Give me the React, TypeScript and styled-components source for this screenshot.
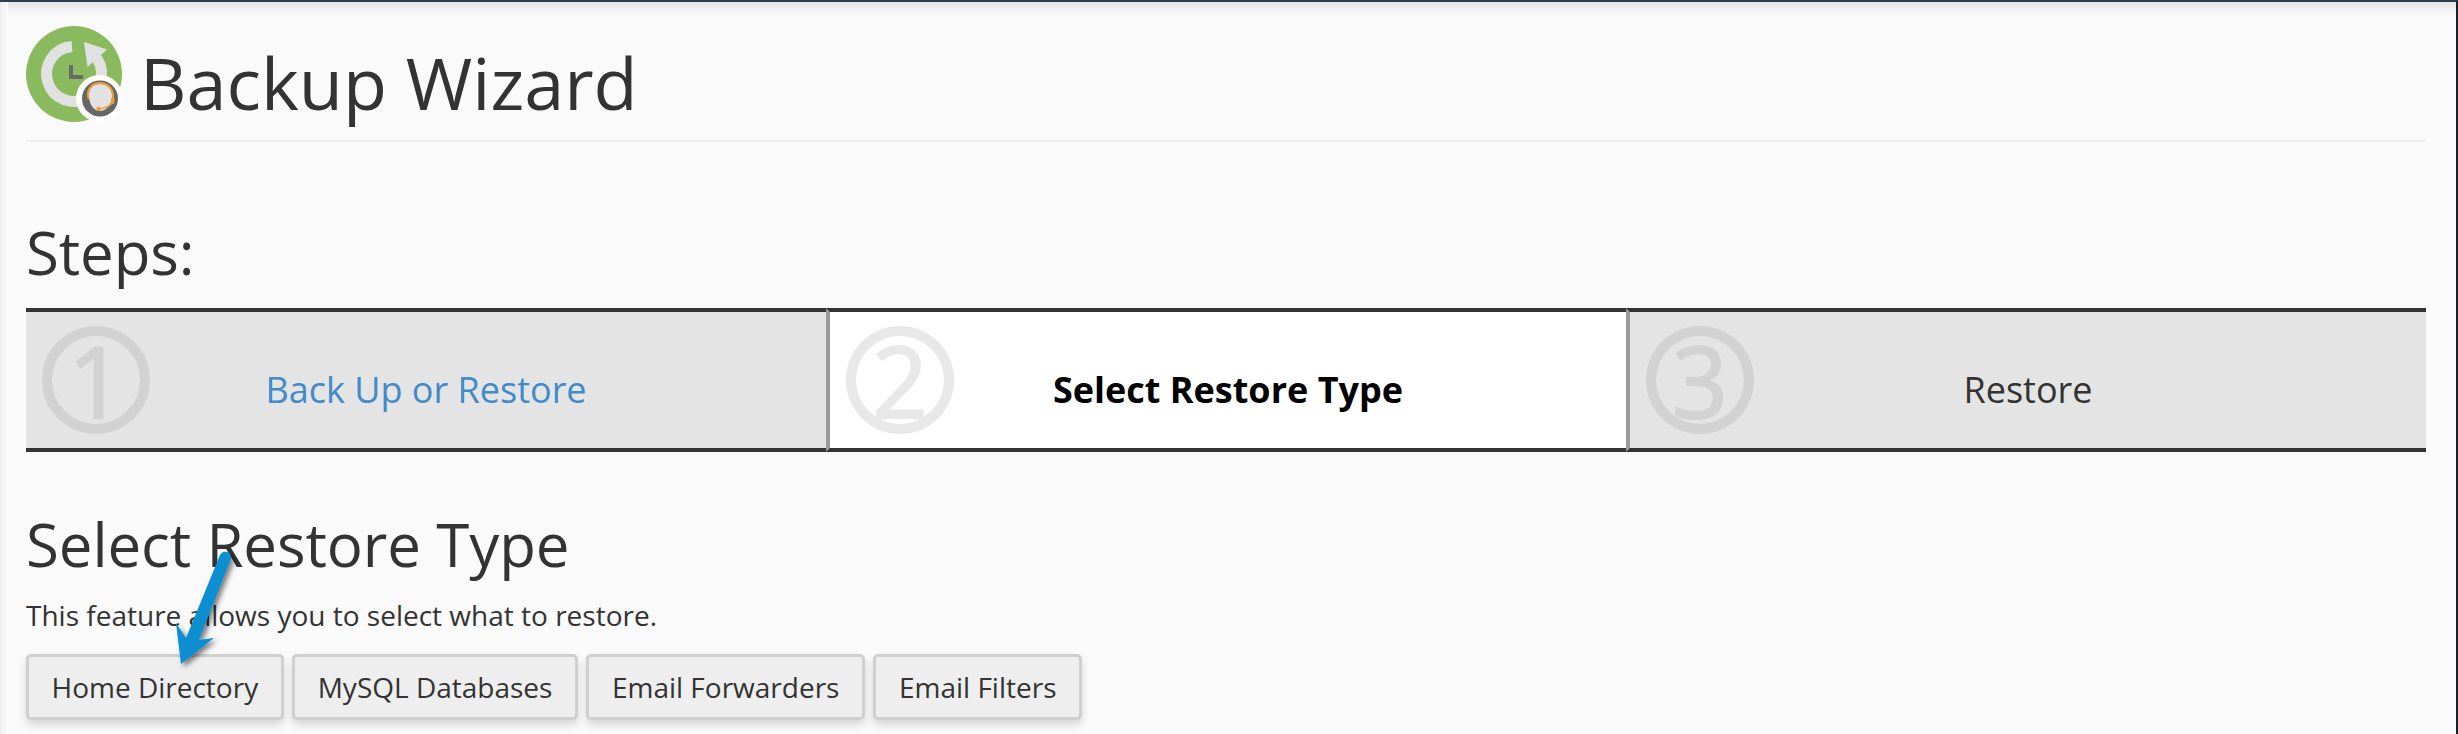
import React from "react";
import styled, { createGlobalStyle } from "styled-components";

const Global = createGlobalStyle`
  html, body { margin: 0; padding: 0; height: 100%; overflow: hidden; background: #fafafa; }
  body { font-family: "Open Sans", "Liberation Sans", sans-serif; color: #333; }
`;

const Frame = styled.div`
  position: relative;
  width: 2458px;
  height: 734px;
  box-sizing: border-box;
  overflow: hidden;
  background: #fafafa;
  border-top: 2px solid #2b3d50;
  border-right: 2px solid #14202e;
  padding: 24px 30px 0 26px;
  &::before {
    content: "";
    position: absolute;
    left: 0;
    top: 0;
    right: 0;
    height: 14px;
    background: linear-gradient(#e6e6e6, #fafafa);
  }
  &::after {
    content: "";
    position: absolute;
    left: 0;
    top: 0;
    bottom: 0;
    width: 8px;
    background: linear-gradient(90deg, #eeeeee, #fafafa);
  }
`;

const Thumb = styled.div`
  position: absolute;
  right: -2px;
  top: -2px;
  width: 2px;
  height: 18px;
  background: #aaa;
`;

const TitleRow = styled.header`
  position: relative;
  z-index: 1;
  display: flex;
  align-items: center;
  gap: 18px;
  height: 96px;
  border-bottom: 2px solid #eeeeee;
  padding-bottom: 18px;
  box-sizing: content-box;
`;

const Title = styled.h1`
  margin: 16px 0 0;
  font-size: 72px;
  font-weight: 400;
  line-height: 96px;
  color: #333;
`;

const StepsHeading = styled.h2`
  margin: 74px 0 0;
  font-size: 60px;
  font-weight: 400;
  line-height: 72px;
  letter-spacing: -0.1px;
  color: #333;
`;

const Steps = styled.div`
  display: grid;
  grid-template-columns: repeat(3, 800px);
  margin-top: 20px;
`;

const Step = styled.div<{ $active?: boolean; $first?: boolean }>`
  position: relative;
  box-sizing: border-box;
  height: 144px;
  border-top: 4px solid #333;
  border-bottom: 4px solid #333;
  border-left: ${(p) => (p.$first ? "0" : "4px solid #999")};
  background: ${(p) => (p.$active ? "#fff" : "#e4e4e4")};
  display: flex;
  align-items: center;
  justify-content: center;
  padding-top: 18px;
`;

const Ring = styled.span<{ $active?: boolean }>`
  position: absolute;
  left: 16px;
  top: 14px;
  width: 108px;
  height: 108px;
  box-sizing: border-box;
  border: 10px solid ${(p) => (p.$active ? "#e8e8e8" : "#d2d2d2")};
  border-radius: 50%;
  display: flex;
  align-items: center;
  justify-content: center;
  font-family: "Open Sans", sans-serif;
  font-size: 98px;
  line-height: 1;
  color: ${(p) => (p.$active ? "#e8e8e8" : "#d2d2d2")};
  -webkit-text-stroke: 2px ${(p) => (p.$active ? "#e8e8e8" : "#d2d2d2")};
  filter: blur(0.5px);
`;

const StepLink = styled.a`
  font-size: 36px;
  color: #428bca;
  text-decoration: none;
`;

const StepCurrent = styled.strong`
  font-size: 36px;
  font-weight: 700;
  color: #000;
`;

const StepPlain = styled.span`
  font-size: 36px;
  color: #333;
`;

const SectionHeading = styled.h2`
  margin: 52px 0 0;
  font-size: 60px;
  font-weight: 400;
  line-height: 80px;
  letter-spacing: -0.1px;
  color: #333;
`;

const Description = styled.p`
  margin: 11px 0 0;
  font-size: 28px;
  line-height: 40px;
  color: #333;
`;

const Buttons = styled.div`
  position: relative;
  display: flex;
  gap: 8.5px;
  margin-top: 19px;
`;

const Button = styled.button`
  box-sizing: border-box;
  height: 66px;
  padding: 0 22.5px;
  border: 3px solid #cfcfcf;
  border-radius: 5px;
  background: #eeeeee;
  font-family: inherit;
  font-size: 28px;
  color: #333;
  box-shadow: 0 5px 9px rgba(0, 0, 0, 0.14);
`;

const Arrow = styled.svg`
  position: absolute;
  left: 140px;
  top: 540px;
  width: 100px;
  height: 140px;
  z-index: 2;
  overflow: visible;
`;

const BackupIcon = () => (
  <svg width="96" height="96" viewBox="0 0 96 96" style={{ flex: "none" }}>
    <circle cx="48" cy="48" r="48" fill="#8aba5e" />
    <path d="M46 20.5 A27.5 27.5 0 1 0 68 29" fill="none" stroke="#e1e1e1" strokeWidth="11" />
    <path d="M58 16 L81 23.5 L61.5 41 Z" fill="#e1e1e1" />
    <path d="M45 39 V51 H57" fill="none" stroke="#6a6a6a" strokeWidth="4" />
    <circle cx="73.5" cy="72.5" r="23.5" fill="#fff" />
    <circle cx="74" cy="72.5" r="18" fill="#666" />
    <path d="M63 72 C62 62 67 58 74 58 C82 58 87 64 86 72 C85 79 80 85 74 85 C68 85 64 79 63 72 Z" fill="#e2e2e2" />
    <path d="M62.5 73 C60 62 67 57 74 57 C82 57 88 63 87 73" fill="none" stroke="#e9a02e" strokeWidth="2" />
    <path d="M86.5 76 C85 80 80 82 73 83" fill="none" stroke="#e9a02e" strokeWidth="1.4" />
    <rect x="85" y="71" width="3.5" height="7" rx="1.7" fill="#e9a02e" />
    <circle cx="72.5" cy="83" r="2.2" fill="#e9a02e" />
  </svg>
);

export default function App() {
  return (
    <>
      <Global />
      <Frame>
        <Thumb />
        <TitleRow>
          <BackupIcon />
          <Title>Backup Wizard</Title>
        </TitleRow>
        <StepsHeading>Steps:</StepsHeading>
        <Steps>
          <Step $first>
            <Ring>1</Ring>
            <StepLink href="#">Back Up or Restore</StepLink>
          </Step>
          <Step $active>
            <Ring $active>2</Ring>
            <StepCurrent>Select Restore Type</StepCurrent>
          </Step>
          <Step>
            <Ring>3</Ring>
            <StepPlain>Restore</StepPlain>
          </Step>
        </Steps>
        <SectionHeading>Select Restore Type</SectionHeading>
        <Description>This feature allows you to select what to restore.</Description>
        <Buttons>
          <Button>Home Directory</Button>
          <Button>MySQL Databases</Button>
          <Button>Email Forwarders</Button>
          <Button>Email Filters</Button>
        </Buttons>
        <Arrow viewBox="0 0 100 140">
          <defs>
            <filter id="arrowShadow" x="-30%" y="-30%" width="160%" height="160%">
              <feDropShadow dx="3" dy="3" stdDeviation="2.5" floodColor="#000" floodOpacity="0.5" />
            </filter>
          </defs>
          <path
            d="M80 13 A5.5 5.5 0 0 1 90.5 18 L59 98 L74 96 L41 122 L36 81 L46 96 Z"
            fill="#0a8ed0"
            filter="url(#arrowShadow)"
          />
        </Arrow>
      </Frame>
    </>
  );
}
